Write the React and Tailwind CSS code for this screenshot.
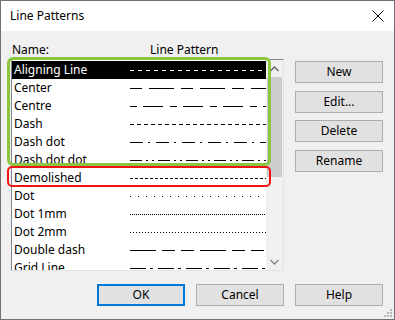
import React from "react";

const rows = [
  { name: "Aligning Line", dash: "4 4", sel: true },
  { name: "Center", dash: "12 7 25 7" },
  { name: "Centre", dash: "7 6 20 7" },
  { name: "Dash", dash: "4 3" },
  { name: "Dash dot", dash: "13 5 2 6" },
  { name: "Dash dot dot", dash: "12 4 2 4 2 4" },
  { name: "Demolished", dash: "3 2" },
  { name: "Dot", dash: "1 7" },
  { name: "Dot 1mm", dash: "1 1" },
  { name: "Dot 2mm", dash: "1 2" },
  { name: "Double dash", dash: "26 6 13 6 13 6" },
  { name: "Grid Line", dash: "16 4 3 5" },
];

function Btn({ children, primary, className = "" }) {
  return (
    <div
      className={
        "w-[88px] h-[22px] flex items-center justify-center bg-[#e1e1e1] text-[12px] text-black " +
        (primary ? "border-2 border-[#0078d7] " : "border border-[#adadad] ") +
        className
      }
    >
      {children}
    </div>
  );
}

export default function App() {
  return (
    <div
      className="relative w-[395px] h-[320px] border border-[#707070] bg-[#f0f0f0] flex flex-col overflow-hidden"
      style={{ fontFamily: '"Noto Sans", "Segoe UI", sans-serif' }}
    >
      {/* Title bar */}
      <div className="h-[30px] bg-white flex items-center justify-between pl-[9px] pr-[9px] shrink-0">
        <span className="text-[12px] text-black">Line Patterns</span>
        <svg width="12" height="12" viewBox="0 0 12 12" className="mr-[1px]">
          <path d="M0.5 0.5 L11.5 11.5 M11.5 0.5 L0.5 11.5" stroke="#000" strokeWidth="1" />
        </svg>
      </div>

      {/* Body */}
      <div className="flex pl-[10px] pr-[11px] pt-[10px]">
        <div className="flex flex-col w-[273px]">
          <div className="h-[18px] flex items-center text-[12px] text-black">
            <span className="pl-[1px] w-[139px]">Name:</span>
            <span>Line Pattern</span>
          </div>
          <div className="h-[212px] flex border-l border-t border-[#828790] border-r border-r-[#e3e3e3] border-b border-b-[#e3e3e3] bg-white">
            <div className="flex-1 overflow-hidden pt-[1px]">
              {rows.map((r) => (
                <div
                  key={r.name}
                  className={
                    "h-[18px] flex items-center text-[12px] " +
                    (r.sel ? "bg-black text-white" : "text-black")
                  }
                >
                  <span className="pl-[2px] w-[118px] whitespace-nowrap">{r.name}</span>
                  <svg width="136" height="18" className="block">
                    <line
                      x1="0"
                      y1="9.5"
                      x2="136"
                      y2="9.5"
                      stroke={r.sel ? "#fff" : "#000"}
                      strokeWidth="1"
                      strokeDasharray={r.dash}
                    />
                  </svg>
                </div>
              ))}
            </div>
            {/* Scrollbar */}
            <div className="w-[17px] bg-[#f0f0f0] flex flex-col">
              <div className="h-[17px] flex items-center justify-center">
                <svg width="9" height="6" viewBox="0 0 9 6">
                  <path d="M0.5 5 L4.5 1 L8.5 5" stroke="#606060" strokeWidth="1.4" fill="none" />
                </svg>
              </div>
              <div className="h-[100px] mx-[1px] bg-[#cdcdcd]" />
              <div className="flex-1" />
              <div className="h-[17px] flex items-center justify-center">
                <svg width="9" height="6" viewBox="0 0 9 6">
                  <path d="M0.5 1 L4.5 5 L8.5 1" stroke="#858585" strokeWidth="1.4" fill="none" />
                </svg>
              </div>
            </div>
          </div>
        </div>
        <div className="flex flex-col ml-[11px] mt-[20px]">
          <Btn>New</Btn>
          <Btn className="mt-[8px]">Edit...</Btn>
          <Btn className="mt-[7px]">Delete</Btn>
          <Btn className="mt-[8px]">Rename</Btn>
        </div>
      </div>

      {/* Bottom buttons */}
      <div className="flex justify-end gap-[11px] pr-[11px] mt-[13px]">
        <Btn primary>OK</Btn>
        <Btn>Cancel</Btn>
        <Btn>Help</Btn>
      </div>

      {/* Annotations */}
      <div className="absolute left-[6px] top-[56px] w-[264px] h-[109px] border-[3px] border-[#8cc63e] rounded-[6px]" />
      <div className="absolute left-[6px] top-[165px] w-[264px] h-[21px] border-2 border-[#f01414] rounded-[5px]" />

      {/* Resize grip */}
      <svg className="absolute right-[2px] bottom-[2px]" width="10" height="10" viewBox="0 0 10 10">
        {[
          [8, 2],
          [5, 5],
          [8, 5],
          [2, 8],
          [5, 8],
          [8, 8],
        ].map(([x, y], i) => (
          <rect key={i} x={x} y={y} width="2" height="2" fill="#b8b8b8" />
        ))}
      </svg>
    </div>
  );
}
